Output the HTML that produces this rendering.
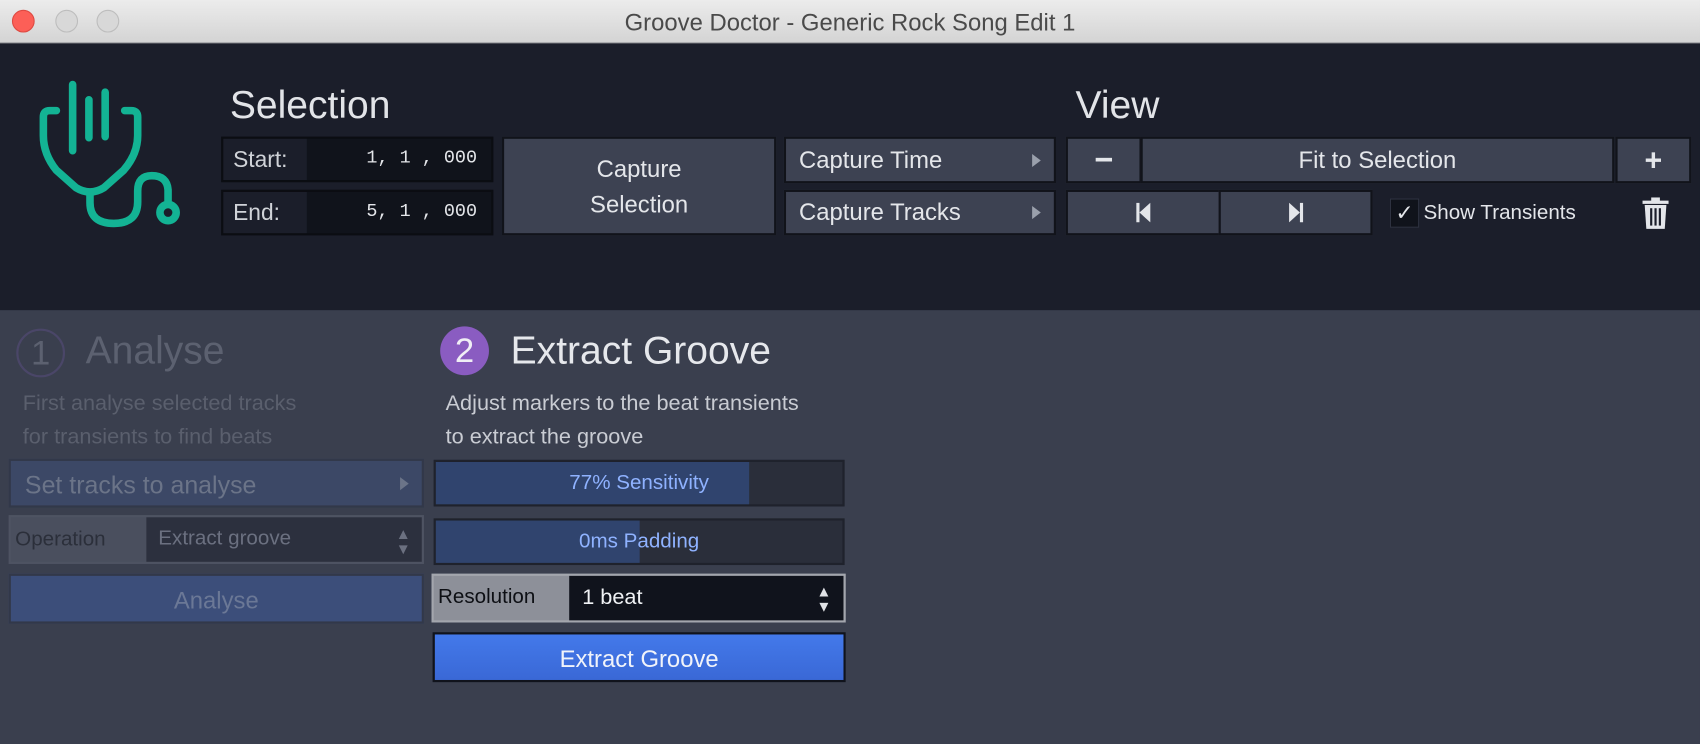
<!DOCTYPE html>
<html><head><meta charset="utf-8"><style>
*{box-sizing:border-box;margin:0;padding:0}
body{width:1700px;height:744px;overflow:hidden;background:#3a3f4e;font-family:"Liberation Sans","DejaVu Sans",sans-serif}
#w{position:absolute;left:0;top:0;width:1568px;height:686px;transform:scale(1.08418,1.0845);transform-origin:0 0;background:#3a3f4e}
.a{position:absolute}
.tb{left:0;top:0;width:1568px;height:40px;background:linear-gradient(#ececec,#d4d4d4);border-bottom:1px solid #b5b5b5}
.tl{width:21px;height:21px;border-radius:50%;top:9px}
.top{left:0;top:40px;width:1568px;height:246px;background:#1b1e2a}
.btn{background:#3d4252;border:2px solid #11131a;color:#e4e6ea;font-size:22px;display:flex;align-items:center;justify-content:center}
.h{color:#e2e4e8;font-size:36px}
.arr{position:absolute;right:12px;top:50%;margin-top:-6px;width:0;height:0;border-left:8px solid #9aa0ac;border-top:6px solid transparent;border-bottom:6px solid transparent}
</style></head><body><div id="w">
<div class="a tb"></div>
<div class="a tl" style="left:11px;background:#fc5f57;border:1px solid #de4a42"></div>
<div class="a tl" style="left:51px;background:#d8d8d8;border:1px solid #bdbdbd"></div>
<div class="a tl" style="left:89px;background:#d8d8d8;border:1px solid #bdbdbd"></div>
<div class="a" style="left:0;width:1568px;top:8px;text-align:center;font-size:22px;color:#4a4a4a">Groove Doctor - Generic Rock Song Edit 1</div>
<div class="a top"></div>
<svg class="a" style="left:0;top:0" width="200" height="240" viewBox="0 0 200 240" fill="none" stroke="#13b394" stroke-width="7" stroke-linecap="round">
<path d="M67,78 V139 M82,92 V127 M97,85 V126"/>
<path d="M52,102 L46,102 Q40,102 40,108 L40,125 Q40,142 52,157 L70,173 Q83,181 96,173 L114,157 Q127,142 127,125 L127,108 Q127,102 121,102 L115,102"/>
<path d="M83,180 L83,187 Q83,206 105,206 Q127,206 127,186 L127,176 Q127,162 140,162 Q154,162 155,175 L155,187"/>
<circle cx="155" cy="196" r="7.5"/>
</svg>
<div class="a h" style="left:212px;top:76px">Selection</div>
<div class="a h" style="left:992px;top:76px">View</div>
<div class="a" style="left:204px;top:126px;width:251px;height:42px;background:#10131b;border:2px solid #0b0d12"></div>
<div class="a" style="left:206px;top:128px;width:77px;height:38px;background:#1b1e2a;color:#d0d3d8;font-size:21px;padding:8px 0 0 9px">Start:</div>
<div class="a" style="left:285px;top:128px;width:155px;height:38px;color:#e4e6ea;font:17px 'Liberation Mono',monospace;text-align:right;padding-top:9px;white-space:pre">1, 1 , 000</div>
<div class="a" style="left:204px;top:175px;width:251px;height:42px;background:#10131b;border:2px solid #0b0d12"></div>
<div class="a" style="left:206px;top:177px;width:77px;height:38px;background:#1b1e2a;color:#d0d3d8;font-size:21px;padding:8px 0 0 9px">End:</div>
<div class="a" style="left:285px;top:177px;width:155px;height:38px;color:#e4e6ea;font:17px 'Liberation Mono',monospace;text-align:right;padding-top:9px;white-space:pre">5, 1 , 000</div>
<div class="a btn" style="left:463px;top:126px;width:253px;height:91px;text-align:center;line-height:33px">Capture<br>Selection</div>
<div class="a btn" style="left:723px;top:126px;width:251px;height:43px;justify-content:flex-start;padding-left:12px">Capture Time<span class="arr"></span></div>
<div class="a btn" style="left:723px;top:175px;width:251px;height:42px;justify-content:flex-start;padding-left:12px">Capture Tracks<span class="arr"></span></div>
<div class="a btn" style="left:983px;top:126px;width:70px;height:43px;font-size:30px;font-weight:bold">−</div>
<div class="a btn" style="left:1052px;top:126px;width:437px;height:43px">Fit to Selection</div>
<div class="a btn" style="left:1490px;top:126px;width:70px;height:43px;font-size:28px;font-weight:bold">+</div>
<div class="a btn" style="left:983px;top:175px;width:143px;height:42px"><svg width="14" height="18"><rect x="0" y="0" width="3" height="18" fill="#e4e6ea"/><path d="M13,0 L3,9 L13,18Z" fill="#e4e6ea"/></svg></div>
<div class="a btn" style="left:1124px;top:175px;width:142px;height:42px"><svg width="14" height="18"><rect x="11" y="0" width="3" height="18" fill="#e4e6ea"/><path d="M1,0 L11,9 L1,18Z" fill="#e4e6ea"/></svg></div>
<div class="a" style="left:1282px;top:183px;width:27px;height:27px;background:#10131b;border:1px solid #2e3240;color:#e4e6ea;font-size:20px;text-align:center;line-height:26px">✓</div>
<div class="a" style="left:1313px;top:186px;color:#e4e6ea;font-size:19px">Show Transients</div>
<svg class="a" style="left:1514px;top:182px" width="26" height="30" viewBox="0 0 26 30" fill="#e4e6ea"><rect x="1" y="3" width="24" height="3"/><rect x="9" y="0" width="8" height="4"/><path d="M3,7 H23 L21.5,29 H4.5Z"/><rect x="8" y="10" width="2" height="16" fill="#1b1e2a"/><rect x="12" y="10" width="2" height="16" fill="#1b1e2a"/><rect x="16" y="10" width="2" height="16" fill="#1b1e2a"/></svg>

<div class="a" style="left:15px;top:303px;width:45px;height:45px;border-radius:50%;border:2px solid #4a4668;color:#5c6170;font-size:32px;text-align:center;line-height:40px">1</div>
<div class="a" style="left:79px;top:302px;color:#5c6170;font-size:36px">Analyse</div>
<div class="a" style="left:406px;top:301px;width:45px;height:45px;border-radius:50%;background:#8a5cc1;color:#f0eef5;font-size:32px;text-align:center;line-height:45px">2</div>
<div class="a" style="left:471px;top:302px;color:#e6e8ec;font-size:36px">Extract Groove</div>
<div class="a" style="left:21px;top:357px;color:#5a5f6d;font-size:20px;line-height:31px">First analyse selected tracks<br>for transients to find beats</div>
<div class="a" style="left:411px;top:357px;color:#c9ccd3;font-size:20px;line-height:31px">Adjust markers to the beat transients<br>to extract the groove</div>
<div class="a" style="left:8px;top:423px;width:383px;height:45px;background:#3c4866;border:2px solid #323849;color:#6b7488;font-size:23px;padding:9px 0 0 13px">Set tracks to analyse<span class="arr" style="border-left-color:#6b7488"></span></div>
<div class="a" style="left:8px;top:475px;width:383px;height:45px;background:#4a4f5e;border:2px solid #4e5362"></div>
<div class="a" style="left:14px;top:487px;color:#2b2f3a;font-size:19px">Operation</div>
<div class="a" style="left:135px;top:477px;width:254px;height:41px;background:#2c303e;color:#6b7080;font-size:19px;padding:9px 0 0 11px">Extract groove</div>
<div class="a" style="left:365px;top:485px;color:#6b7080;font-size:14px;line-height:14px">▲<br>▼</div>
<div class="a" style="left:8px;top:529px;width:383px;height:46px;background:#3c4e7a;border:2px solid #323849;color:#6b7896;font-size:22px;text-align:center;padding-top:10px">Analyse</div>
<div class="a" style="left:400px;top:424px;width:379px;height:43px;background:#2a2e3a;border:2px solid #1f222c"></div>
<div class="a" style="left:402px;top:426px;width:289px;height:39px;background:#30446e"></div>
<div class="a" style="left:400px;top:435px;width:379px;text-align:center;color:#8fb2ff;font-size:19px">77% Sensitivity</div>
<div class="a" style="left:400px;top:478px;width:379px;height:43px;background:#2a2e3a;border:2px solid #1f222c"></div>
<div class="a" style="left:402px;top:480px;width:188px;height:39px;background:#30446e"></div>
<div class="a" style="left:400px;top:489px;width:379px;text-align:center;color:#8fb2ff;font-size:19px">0ms Padding</div>
<div class="a" style="left:398px;top:529px;width:382px;height:45px;background:#8d9099;border:2px solid #a3a6ad"></div>
<div class="a" style="left:404px;top:540px;color:#0d0f14;font-size:19px">Resolution</div>
<div class="a" style="left:525px;top:531px;width:253px;height:41px;background:#10131c;color:#f0f2f5;font-size:20px;padding:9px 0 0 12px">1 beat</div>
<div class="a" style="left:753px;top:538px;color:#e0e2e6;font-size:14px;line-height:14px">▲<br>▼</div>
<div class="a" style="left:399px;top:583px;width:381px;height:46px;background:linear-gradient(#4379ea,#3a68d6);border:2px solid #10131c;color:#f0f3fa;font-size:22px;text-align:center;padding-top:10px">Extract Groove</div>
</div></body></html>
